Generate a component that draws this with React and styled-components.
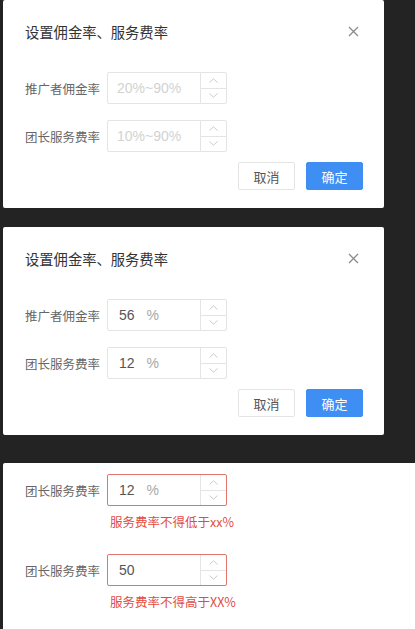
import React from 'react';
import styled, { createGlobalStyle } from 'styled-components';

const GlobalStyle = createGlobalStyle`
	html, body {
		margin: 0;
		padding: 0;
		background: #232323;
		font-family: "Noto Sans CJK SC", "Noto Sans", sans-serif;
	}
`;

const Page = styled.div`
	display: flex;
	flex-direction: column;
	padding-left: 3px;
	width: 412px;
	height: 629px;
	overflow: hidden;
`;

const Dialog = styled.div`
	background: #fff;
	width: ${p => p.$full ? '412px' : '381px'};
	border-radius: ${p => p.$full ? '2px 0 0 0' : '2px'};
	margin-bottom: ${p => p.$gap || 0}px;
	padding: ${p => p.$pad || '22px 21px 18px 22px'};
	box-sizing: border-box;
	flex-shrink: 0;
`;

const Header = styled.div`
	display: flex;
	align-items: center;
	justify-content: space-between;
	height: 20px;
	margin-bottom: 30px;
	padding-right: 4px;
`;

const Title = styled.div`
	font-size: 14.3px;
	color: #333;
	line-height: 20px;
`;

const Close = styled.svg`
	width: 11px;
	height: 11px;
	margin-top: -1px;
`;

const Row = styled.div`
	display: flex;
	align-items: center;
	margin-bottom: ${p => p.$gap || 0}px;
`;

const Field = styled.div`
	display: flex;
	flex-direction: column;
`;

const Label = styled.div`
	width: 82px;
	font-size: 12.5px;
	color: #666;
	align-self: ${p => p.$top ? 'flex-start' : 'auto'};
	margin-top: ${p => p.$top ? 7 : 0}px;
`;

const InputBox = styled.div`
	display: flex;
	width: 120px;
	height: 32px;
	box-sizing: border-box;
	border: 1px solid ${p => p.$error ? '#e0756e' : '#e4e4e4'};
	border-radius: 2px;
	background: #fff;
`;

const InputText = styled.div`
	flex: 1;
	display: flex;
	align-items: center;
	padding-left: ${p => p.$placeholder ? 9 : 11}px;
	font-family: "Liberation Sans", "Noto Sans", sans-serif;
	font-size: 14px;
	color: ${p => p.$placeholder ? '#d2d2d2' : '#555'};
`;

const Unit = styled.span`
	color: #a8a8a8;
	margin-left: 12px;
`;

const Stepper = styled.div`
	width: 25px;
	display: flex;
	flex-direction: column;
	border-left: 1px solid #e4e4e4;
`;

const StepHalf = styled.div`
	flex: 1;
	display: flex;
	align-items: center;
	justify-content: center;
	& + & {
		border-top: 1px solid #e4e4e4;
	}
`;

const Chevron = styled.svg`
	width: 9px;
	height: 5px;
`;

const Footer = styled.div`
	display: flex;
	justify-content: flex-end;
	gap: 11px;
	margin-top: 10px;
`;

const Button = styled.button`
	width: 57px;
	height: 28px;
	border-radius: 2px;
	font-family: "Noto Sans CJK SC", sans-serif;
	font-size: 13px;
	padding: 0;
	cursor: pointer;
	border: 1px solid ${p => p.$primary ? '#3e8ef4' : '#e4e4e4'};
	background: ${p => p.$primary ? '#3e8ef4' : '#fff'};
	color: ${p => p.$primary ? '#fff' : '#555'};
`;

const Body = styled(Dialog)`
	flex: 1;
`;

const ErrorText = styled.div`
	font-size: 12.5px;
	color: #e24c43;
	padding-left: 3px;
	margin-top: 7px;
	line-height: 18px;
`;

const Spin = () => (
	<Stepper>
		<StepHalf>
			<Chevron viewBox="0 0 9 5"><path d="M0.5 4.5 L4.5 0.8 L8.5 4.5" fill="none" stroke="#c4c4c4" strokeWidth="0.9" /></Chevron>
		</StepHalf>
		<StepHalf>
			<Chevron viewBox="0 0 9 5"><path d="M0.5 0.5 L4.5 4.2 L8.5 0.5" fill="none" stroke="#c4c4c4" strokeWidth="0.9" /></Chevron>
		</StepHalf>
	</Stepper>
);

const NumberInput = ({ value, unit, placeholder, error }) => (
	<InputBox $error={error}>
		<InputText $placeholder={!value}>
			{value || placeholder}
			{value && unit && <Unit>{unit}</Unit>}
		</InputText>
		<Spin />
	</InputBox>
);

const RateDialog = ({ gap, rows }) => (
	<Dialog $gap={gap}>
		<Header>
			<Title>设置佣金率、服务费率</Title>
			<Close viewBox="0 0 11 11"><path d="M1 1 L10 10 M10 1 L1 10" stroke="#8a8a8a" strokeWidth="1.3" /></Close>
		</Header>
		<Row $gap={16}>
			<Label>推广者佣金率</Label>
			<NumberInput {...rows[0]} />
		</Row>
		<Row>
			<Label>团长服务费率</Label>
			<NumberInput {...rows[1]} />
		</Row>
		<Footer>
			<Button>取消</Button>
			<Button $primary>确定</Button>
		</Footer>
	</Dialog>
);

export default function App() {
	return <>
		<GlobalStyle />
		<Page>
			<RateDialog gap={19} rows={[{ placeholder: '20%~90%' }, { placeholder: '10%~90%' }]} />
			<RateDialog gap={28} rows={[{ value: '56', unit: '%' }, { value: '12', unit: '%' }]} />
			<Body $full $pad="11px 0 0 22px">
				<Row $gap={23}>
					<Label $top>团长服务费率</Label>
					<Field>
						<NumberInput value="12" unit="%" error />
						<ErrorText>服务费率不得低于xx%</ErrorText>
					</Field>
				</Row>
				<Row>
					<Label $top>团长服务费率</Label>
					<Field>
						<NumberInput value="50" error />
						<ErrorText>服务费率不得高于XX%</ErrorText>
					</Field>
				</Row>
			</Body>
		</Page>
	</>;
}
